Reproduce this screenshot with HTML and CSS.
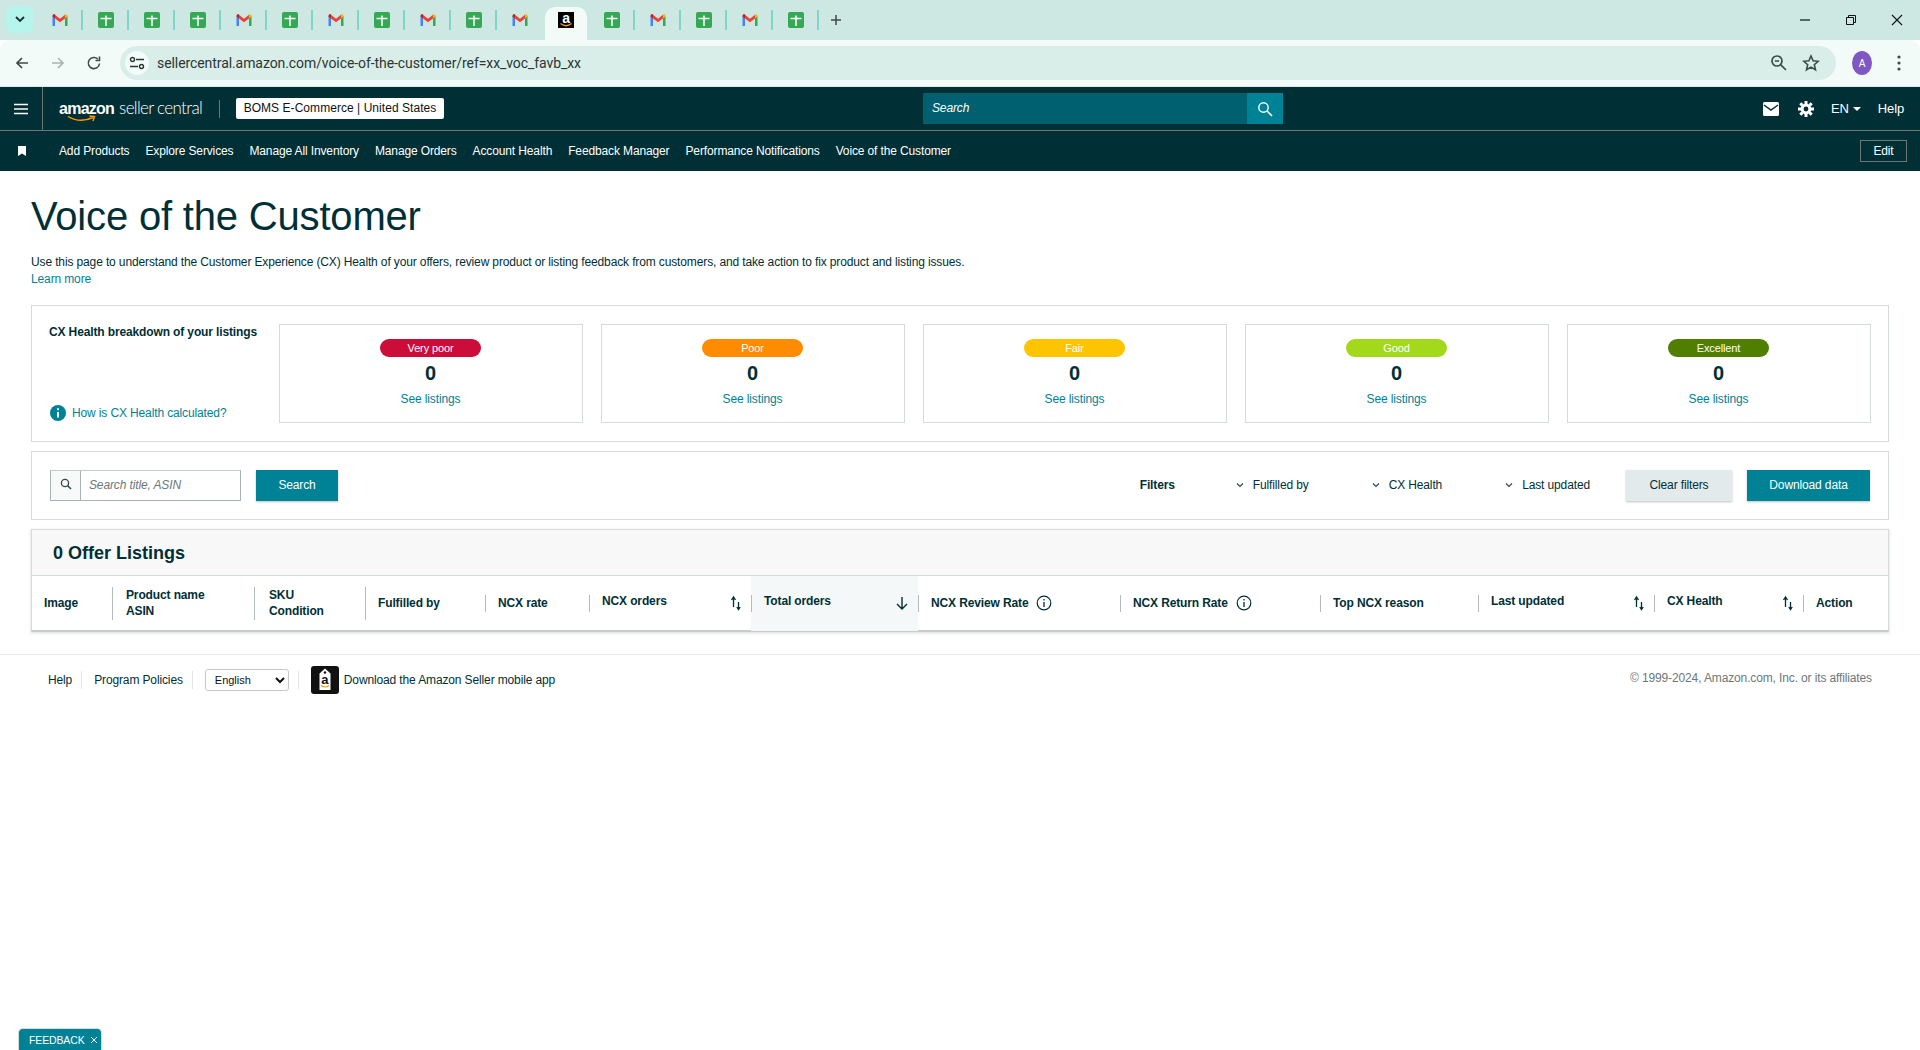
FILE: index.html
```html
<!DOCTYPE html>
<html lang="en">
<head>
    <meta charset="UTF-8">
    <meta name="viewport" content="width=device-width, initial-scale=1.0">
    <title>Voice of the Customer</title>
    <link rel="stylesheet" href="styles.css">
</head>

<body>
    <svg class="defs" width="0" height="0">
        <symbol id="gmail" viewBox="0 0 16 14">
            <path d="M0.5 13V3L3 1.5V13H1.5A1 1 0 0 1 0.5 13Z" fill="#4285f4"/>
            <path d="M13 13V1.5L15.5 3V13H13Z" fill="#34a853"/>
            <path d="M3 1.8L8 5.8L13 1.8V5.4L8 9.3L3 5.4Z" fill="#ea4335"/>
            <path d="M0.5 3C0.5 1 2.3 0.3 3 1.5V5.4L0.5 3.5Z" fill="#c5221f"/>
            <path d="M13 1.5C13.8 0.3 15.5 1 15.5 3V3.5L13 5.4Z" fill="#fbbc04"/>
        </symbol>
        <symbol id="sheet" viewBox="0 0 16 16">
            <rect width="16" height="16" rx="2" fill="#34a853"/>
            <path d="M2.5 6.5H13.5M8 3.5V14" stroke="#fff" stroke-width="1.5" fill="none"/>
        </symbol>
        <symbol id="sort" viewBox="0 0 12 16">
            <path d="M3.5 12V3M1.5 5L3.5 2L5.5 5" stroke="#002f36" stroke-width="1.3" fill="none"/>
            <path d="M8.5 7V14M6.8 12L8.5 14.6L10.2 12" stroke="#002f36" stroke-width="1.3" fill="none"/>
        </symbol>
        <symbol id="chev" viewBox="0 0 8 6">
            <path d="M1 1.5L4 4.5L7 1.5" stroke="#33494e" stroke-width="1.2" fill="none"/>
        </symbol>
        <symbol id="info-line" viewBox="0 0 16 16">
            <circle cx="8" cy="8" r="6.8" stroke="#002f36" stroke-width="1.2" fill="none"/>
            <path d="M8 7V12M8 4V5.4" stroke="#002f36" stroke-width="1.3" fill="none"/>
        </symbol>
    </svg>

    <div class="tabstrip">
        <button class="tab-search">
            <svg width="10" height="7" viewBox="0 0 10 7"><path d="M1 1L5 5L9 1" stroke="#1f2d2a" stroke-width="1.8" fill="none"/></svg>
        </button>
        <div class="tabs">
            <span class="tab sep"><svg class="fav-m"><use href="#gmail"/></svg></span>
            <span class="tab sep"><svg class="fav"><use href="#sheet"/></svg></span>
            <span class="tab sep"><svg class="fav"><use href="#sheet"/></svg></span>
            <span class="tab sep"><svg class="fav"><use href="#sheet"/></svg></span>
            <span class="tab sep"><svg class="fav-m"><use href="#gmail"/></svg></span>
            <span class="tab sep"><svg class="fav"><use href="#sheet"/></svg></span>
            <span class="tab sep"><svg class="fav-m"><use href="#gmail"/></svg></span>
            <span class="tab sep"><svg class="fav"><use href="#sheet"/></svg></span>
            <span class="tab sep"><svg class="fav-m"><use href="#gmail"/></svg></span>
            <span class="tab sep"><svg class="fav"><use href="#sheet"/></svg></span>
            <span class="tab"><svg class="fav-m"><use href="#gmail"/></svg></span>
            <span class="tab tab-active">
                <span class="fav-amazon">a
                    <svg class="fav-smile" width="12" height="5" viewBox="0 0 12 5"><path d="M0.5 0.5Q6 5 11.5 0.5" stroke="#f90" stroke-width="1.3" fill="none"/></svg>
                </span>
            </span>
            <span class="tab sep"><svg class="fav"><use href="#sheet"/></svg></span>
            <span class="tab sep"><svg class="fav-m"><use href="#gmail"/></svg></span>
            <span class="tab sep"><svg class="fav"><use href="#sheet"/></svg></span>
            <span class="tab sep"><svg class="fav-m"><use href="#gmail"/></svg></span>
            <span class="tab sep"><svg class="fav"><use href="#sheet"/></svg></span>
        </div>
        <svg class="new-tab" width="12" height="12" viewBox="0 0 12 12"><path d="M6 1V11M1 6H11" stroke="#3e4b48" stroke-width="1.5"/></svg>
        <div class="window-controls">
            <svg width="12" height="12" viewBox="0 0 12 12"><path d="M1 6H11" stroke="#111" stroke-width="1.2"/></svg>
            <svg width="12" height="12" viewBox="0 0 12 12"><path d="M1.5 3.5H8.5V10.5H1.5ZM3.5 3.5V1.5H10.5V8.5H8.5" stroke="#111" fill="none"/></svg>
            <svg width="12" height="12" viewBox="0 0 12 12"><path d="M1 1L11 11M11 1L1 11" stroke="#111" stroke-width="1.1"/></svg>
        </div>
    </div>

    <div class="toolbar">
        <svg class="tool-icon" viewBox="0 0 16 16"><path d="M14 8H3M8 3L3 8L8 13" stroke="#3e4b48" stroke-width="1.7" fill="none"/></svg>
        <svg class="tool-icon" viewBox="0 0 16 16"><path d="M2 8H13M8 3L13 8L8 13" stroke="#a9b3b0" stroke-width="1.7" fill="none"/></svg>
        <svg class="tool-icon" viewBox="0 0 16 16"><path d="M13.5 8.5A5.6 5.6 0 1 1 11.8 4M13.5 1.5V5.5H9.5" stroke="#3e4b48" stroke-width="1.6" fill="none"/></svg>
        <div class="omnibox">
            <span class="site-chip">
                <svg width="16" height="14" viewBox="0 0 16 14"><path d="M7 3.5H15M1 10.5H9" stroke="#2b3634" stroke-width="1.6"/><circle cx="3.5" cy="3.5" r="2" stroke="#2b3634" stroke-width="1.4" fill="none"/><circle cx="12.5" cy="10.5" r="2" stroke="#2b3634" stroke-width="1.4" fill="none"/></svg>
            </span>
            <span class="url">sellercentral.amazon.com/voice-of-the-customer/ref=xx_voc_favb_xx</span>
            <svg class="omni-icon" width="18" height="18" viewBox="0 0 18 18"><circle cx="7" cy="7" r="5" stroke="#3e4b48" stroke-width="1.7" fill="none"/><path d="M10.8 10.8L16 16M4.8 7H9.2" stroke="#3e4b48" stroke-width="1.7"/></svg>
            <svg class="omni-icon" width="18" height="18" viewBox="0 0 18 18"><path d="M9 2L11.1 6.8L16.2 7.3L12.3 10.7L13.5 15.8L9 13.1L4.5 15.8L5.7 10.7L1.8 7.3L6.9 6.8Z" stroke="#3e4b48" stroke-width="1.6" fill="none"/></svg>
        </div>
        <span class="avatar">A</span>
        <svg class="tool-dots" width="4" height="16" viewBox="0 0 4 16"><circle cx="2" cy="2" r="1.6" fill="#3e4b48"/><circle cx="2" cy="8" r="1.6" fill="#3e4b48"/><circle cx="2" cy="14" r="1.6" fill="#3e4b48"/></svg>
    </div>

    <header class="topbar">
        <div class="menu-btn">
            <svg width="14" height="12" viewBox="0 0 14 12"><path d="M0 1.5H14M0 6H14M0 10.5H14" stroke="#fff" stroke-width="1.6"/></svg>
        </div>
        <div class="logo">
            <span class="logo-amazon">amazon</span>
            <span class="logo-seller">seller central</span>
            <svg class="logo-smile" width="30" height="8" viewBox="0 0 30 8"><path d="M1 1.5Q13 8.5 26 2.5M22.5 1L27.5 1.5L26 6" stroke="#f90" stroke-width="1.4" fill="none"/></svg>
        </div>
        <span class="logo-divider"></span>
        <span class="account-badge">BOMS E-Commerce | United States</span>

        <div class="top-search">
            <span class="top-search-text">Search</span>
            <span class="top-search-btn">
                <svg width="16" height="16" viewBox="0 0 16 16"><circle cx="6.5" cy="6.5" r="4.7" stroke="#fff" stroke-width="1.4" fill="none"/><path d="M10 10L15 15" stroke="#fff" stroke-width="1.6"/></svg>
            </span>
        </div>

        <div class="top-right">
            <svg class="mail" width="16" height="14" viewBox="0 0 16 14"><rect width="16" height="14" rx="1.5" fill="#fff"/><path d="M1 3L8 8L15 3" stroke="#002f36" stroke-width="1.5" fill="none"/></svg>
            <svg class="gear" width="16" height="16" viewBox="0 0 16 16"><circle cx="8" cy="8" r="3.9" fill="none" stroke="#fff" stroke-width="3"/><path d="M8 0V3M8 13V16M0 8H3M13 8H16M2.3 2.3L4.4 4.4M11.6 11.6L13.7 13.7M13.7 2.3L11.6 4.4M4.4 11.6L2.3 13.7" stroke="#fff" stroke-width="3"/></svg>
            <span class="lang">EN<i class="caret"></i></span>
            <span class="top-help">Help</span>
        </div>
    </header>

    <nav class="favbar">
        <svg class="bookmark" width="8" height="10" viewBox="0 0 8 10"><path d="M0 0H8V10L4 7.5L0 10Z" fill="#fff"/></svg>
        <a href="#">Add Products</a>
        <a href="#">Explore Services</a>
        <a href="#">Manage All Inventory</a>
        <a href="#">Manage Orders</a>
        <a href="#">Account Health</a>
        <a href="#">Feedback Manager</a>
        <a href="#">Performance Notifications</a>
        <a href="#">Voice of the Customer</a>
        <span class="edit-btn">Edit</span>
    </nav>

    <main class="page">
        <h1>Voice of the Customer</h1>
        <p class="intro">Use this page to understand the Customer Experience (CX) Health of your offers, review product or listing feedback from customers, and take action to fix product and listing issues.</p>
        <a class="learn-more" href="#">Learn more</a>

        <section class="panel breakdown">
            <div class="breakdown-side">
                <strong>CX Health breakdown of your listings</strong>
                <a class="calc-link" href="#">
                    <svg width="16" height="16" viewBox="0 0 16 16"><circle cx="8" cy="8" r="8" fill="#008296"/><path d="M8 7V12.5M8 3.3V5.3" stroke="#fff" stroke-width="2"/></svg>
                    How is CX Health calculated?
                </a>
            </div>
            <div class="health-card">
                <span class="pill pill-verypoor">Very poor</span>
                <b>0</b>
                <a href="#">See listings</a>
            </div>
            <div class="health-card">
                <span class="pill pill-poor">Poor</span>
                <b>0</b>
                <a href="#">See listings</a>
            </div>
            <div class="health-card">
                <span class="pill pill-fair">Fair</span>
                <b>0</b>
                <a href="#">See listings</a>
            </div>
            <div class="health-card">
                <span class="pill pill-good">Good</span>
                <b>0</b>
                <a href="#">See listings</a>
            </div>
            <div class="health-card">
                <span class="pill pill-excellent">Excellent</span>
                <b>0</b>
                <a href="#">See listings</a>
            </div>
        </section>

        <section class="panel filterbar">
            <div class="search-group">
                <span class="search-icon">
                    <svg width="12" height="12" viewBox="0 0 12 12"><circle cx="5" cy="5" r="3.6" stroke="#33494e" stroke-width="1.3" fill="none"/><path d="M7.6 7.6L11 11" stroke="#33494e" stroke-width="1.5"/></svg>
                </span>
                <span class="search-input">Search title, ASIN</span>
            </div>
            <span class="btn btn-primary btn-search">Search</span>
            <div class="filters">
                <strong>Filters</strong>
                <span class="filter"><svg width="8" height="6"><use href="#chev"/></svg>Fulfilled by</span>
                <span class="filter"><svg width="8" height="6"><use href="#chev"/></svg>CX Health</span>
                <span class="filter"><svg width="8" height="6"><use href="#chev"/></svg>Last updated</span>
            </div>
            <span class="btn btn-clear">Clear filters</span>
            <span class="btn btn-primary btn-download">Download data</span>
        </section>

        <section class="listings">
            <h2>0 Offer Listings</h2>
            <div class="listing-head">
                <div class="col col-image">Image</div>
                <div class="col col-line col-product">Product name<br>ASIN</div>
                <div class="col col-line col-tall col-sku">SKU<br>Condition</div>
                <div class="col col-line col-tall">Fulfilled by</div>
                <div class="col col-line">NCX rate</div>
                <div class="col col-line col-sort"><span>NCX orders</span><svg width="12" height="16"><use href="#sort"/></svg></div>
                <div class="col col-line col-sort col-active"><span>Total orders</span>
                    <svg width="14" height="16" viewBox="0 0 14 16"><path d="M7 2V14M2 9L7 14L12 9" stroke="#002f36" stroke-width="1.4" fill="none"/></svg>
                </div>
                <div class="col col-line">NCX Review Rate<svg class="col-info" width="16" height="16"><use href="#info-line"/></svg></div>
                <div class="col col-line">NCX Return Rate<svg class="col-info" width="16" height="16"><use href="#info-line"/></svg></div>
                <div class="col col-line">Top NCX reason</div>
                <div class="col col-line col-sort"><span>Last updated</span><svg width="12" height="16"><use href="#sort"/></svg></div>
                <div class="col col-line col-sort"><span>CX Health</span><svg width="12" height="16"><use href="#sort"/></svg></div>
                <div class="col col-line">Action</div>
            </div>
        </section>
    </main>

    <footer class="footer">
        <a href="#">Help</a>
        <span class="foot-sep"></span>
        <a href="#">Program Policies</a>
        <span class="foot-sep"></span>
        <select class="lang-select">
            <option>English</option>
        </select>
        <span class="foot-sep"></span>
        <svg class="app-icon" width="28" height="28" viewBox="0 0 28 28">
            <rect width="28" height="28" rx="3" fill="#111"/>
            <path d="M14 2.5L19.5 7.5V24H8.5V7.5Z" fill="#fff"/>
            <circle cx="14" cy="6.5" r="1.2" fill="#111"/>
            <path d="M10 19.5Q14 22.5 18 19.5" stroke="#f90" stroke-width="1.2" fill="none"/>
        </svg>
        <span class="app-letter">a</span>
        <a class="app-link" href="#">Download the Amazon Seller mobile app</a>
        <span class="copyright">© 1999-2024, Amazon.com, Inc. or its affiliates</span>
    </footer>

    <div class="feedback">FEEDBACK
        <svg width="8" height="8" viewBox="0 0 8 8"><path d="M1 1L7 7M7 1L1 7" stroke="#fff" stroke-width="1"/></svg>
    </div>
</body>
</html>
```

FILE: styles.css
```css
* {
    box-sizing: border-box;
}

html, body {
    height: 100%;
}

body {
    margin: 0;
    overflow: hidden;
    background: #ffffff;
    color: #002f36;
    font-family: 'Liberation Sans', Arial, sans-serif;
    font-size: 12px;
    letter-spacing: -0.13px;
}

a {
    color: #008296;
    text-decoration: none;
}

.defs {
    position: absolute;
}

/* browser chrome */
.tabstrip {
    display: flex;
    align-items: center;
    height: 40px;
    background: #cde8e2;
    padding-left: 6px;
}

.tab-search {
    width: 28px;
    height: 27px;
    margin-top: -1px;
    border: none;
    border-radius: 9px;
    background: #b5f5ec;
    display: flex;
    align-items: center;
    justify-content: center;
    padding: 0;
}

.tabs {
    display: flex;
    margin-left: 3px;
    align-items: center;
}

.tab {
    width: 46px;
    height: 16px;
    display: flex;
    align-items: center;
    justify-content: center;
    flex: none;
}

.sep {
    border-right: 2px solid #7fd6c9;
    height: 20px;
    padding-left: 2px;
}

.tab-active {
    height: 33px;
    margin-top: 7px;
    background: #f3fbf8;
    border-radius: 10px 10px 0 0;
    width: 42px;
    margin-left: 2px;
    margin-right: 2px;
    padding-bottom: 7px;
}

.fav {
    width: 16px;
    height: 16px;
}

.fav-m {
    width: 16px;
    height: 14px;
}

.fav-amazon {
    position: relative;
    width: 16px;
    height: 16px;
    background: #000;
    color: #fff;
    font-size: 14px;
    font-weight: bold;
    line-height: 13px;
    text-align: center;
}

.fav-smile {
    position: absolute;
    left: 2px;
    top: 11px;
}

.new-tab {
    margin-left: 11px;
}

.window-controls {
    margin-left: auto;
    display: flex;
    gap: 34px;
    padding-right: 17px;
}

.toolbar {
    display: flex;
    align-items: center;
    height: 47px;
    background: #f3fbf8;
    border-radius: 10px 10px 0 0;
    border-bottom: 1px solid #dce6e3;
    padding-left: 14px;
}

.tool-icon {
    width: 16px;
    height: 16px;
    margin-right: 20px;
}

.omnibox {
    display: flex;
    align-items: center;
    height: 34px;
    width: 1716px;
    margin-left: -2px;
    border-radius: 17px;
    background: #d9eee8;
    padding-left: 5px;
    padding-right: 16px;
}

.site-chip {
    width: 24px;
    height: 24px;
    border-radius: 50%;
    background: #f3fbf8;
    display: flex;
    align-items: center;
    justify-content: center;
}

.url {
    margin-left: 8px;
    font-family: Roboto, sans-serif;
    font-size: 14px;
    letter-spacing: -0.08px;
    color: #2b3634;
    flex: 1;
}

.omni-icon {
    margin-left: 14px;
}

.avatar {
    width: 20px;
    height: 24px;
    margin-left: 16px;
    border-radius: 50%;
    background: #7e57c2;
    color: #fff;
    font-size: 10px;
    display: flex;
    align-items: center;
    justify-content: center;
}

.tool-dots {
    margin-left: 25px;
}

/* seller central header */
.topbar {
    display: flex;
    align-items: center;
    height: 44px;
    background: #002f36;
    border-bottom: 1px solid #6c7778;
    color: #fff;
}

.menu-btn {
    width: 43px;
    height: 43px;
    border-right: 1px solid #6c7778;
    display: flex;
    align-items: center;
    justify-content: center;
    padding-right: 1px;
}

.logo {
    position: relative;
    margin-left: 16px;
    display: flex;
    align-items: baseline;
    width: 144px;
    height: 24px;
    line-height: 22px;
    white-space: nowrap;
}

.logo-amazon {
    font-size: 16px;
    font-weight: bold;
    letter-spacing: -0.75px;
}

.logo-seller {
    margin-left: 5px;
    font-family: Lato, sans-serif;
    font-weight: 300;
    font-size: 17px;
    letter-spacing: -0.67px;
}

.logo-smile {
    position: absolute;
    left: 8px;
    top: 18px;
}

.logo-divider {
    width: 1px;
    height: 18px;
    margin-left: 16px;
    background: #6c7778;
}

.account-badge {
    margin-left: 16px;
    height: 21px;
    width: 208px;
    border-radius: 2px;
    background: #fff;
    color: #111;
    text-align: center;
    line-height: 21px;
    letter-spacing: 0.05px;
    white-space: nowrap;
}

.top-search {
    display: flex;
    height: 31px;
    margin-left: 479px;
    width: 360px;
}

.top-search-text {
    flex: 1;
    background: #006070;
    color: #fff;
    font-style: italic;
    padding-left: 9px;
    line-height: 31px;
}

.top-search-btn {
    width: 36px;
    background: #008296;
    display: flex;
    align-items: center;
    justify-content: center;
}

.top-right {
    display: flex;
    align-items: center;
    margin-left: auto;
    padding-right: 16px;
    font-size: 13px;
}

.gear {
    margin-left: 19px;
}

.lang {
    margin-left: 17px;
    display: flex;
    align-items: center;
}

.caret {
    margin-left: 4px;
    border: 4px solid transparent;
    border-top-color: #fff;
    border-bottom: none;
}

.top-help {
    margin-left: 17px;
}

.favbar {
    display: flex;
    align-items: center;
    height: 40px;
    background: #002f36;
    padding-left: 18px;
}

.favbar a {
    color: #fff;
    margin-right: 16px;
    white-space: nowrap;
}

.bookmark {
    margin-right: 33px;
}

.edit-btn {
    margin-left: auto;
    margin-right: 13px;
    width: 47px;
    height: 22px;
    border: 1px solid #6c7778;
    color: #fff;
    text-align: center;
    line-height: 20px;
}

/* page */
.page {
    padding: 0 31px;
}

h1 {
    margin: 20px 0 0;
    font-size: 40px;
    font-weight: normal;
    line-height: 50px;
    letter-spacing: -0.18px;
    color: #002f36;
}

.intro {
    margin: 13px 0 0;
    line-height: 16px;
    color: #002f36;
}

.learn-more {
    display: block;
    margin-top: 1px;
    line-height: 16px;
}

.panel {
    display: flex;
    border: 1.5px solid #d5dbdb;
}

.breakdown {
    margin-top: 18px;
    height: 137px;
    padding: 18px 18px 18px 17px;
    gap: 18px;
}

.breakdown-side {
    width: 229.5px;
    display: flex;
    flex-direction: column;
    justify-content: space-between;
    padding-bottom: 1px;
    margin-right: -18px;
    flex: none;
}

.breakdown-side strong {
    line-height: 16px;
}

.calc-link {
    display: flex;
    align-items: center;
    gap: 6px;
    line-height: 16px;
    margin-bottom: 1px;
    margin-left: 1px;
}

.health-card {
    width: 304px;
    flex: none;
    height: 99px;
    border: 1.5px solid #d5dbdb;
    display: flex;
    flex-direction: column;
    align-items: center;
}

.pill {
    width: 101px;
    height: 18px;
    margin-top: 14px;
    border-radius: 9px;
    color: #fff;
    font-size: 11px;
    line-height: 18px;
    text-align: center;
}

.pill-verypoor { background: #cc0c39; }
.pill-poor { background: #ff8c00; }
.pill-fair { background: #ffc400; }
.pill-good { background: #a4d81a; }
.pill-excellent { background: #507f00; }

.health-card b {
    font-size: 20px;
    line-height: 24px;
    margin-top: 4px;
}

.health-card a {
    margin-top: 6px;
    line-height: 16px;
}

.filterbar {
    margin-top: 9px;
    height: 69px;
    align-items: center;
    padding: 0 18px;
}

.search-group {
    display: flex;
    width: 191px;
    height: 31px;
    border: 1px solid #a6b2b4;
    border-top-color: #c3cbcc;
}

.search-icon {
    width: 30px;
    background: #f8f9f9;
    border-right: 1px solid #a6b2b4;
    display: flex;
    align-items: center;
    justify-content: center;
    padding-bottom: 3px;
}

.search-input {
    padding-left: 8px;
    font-style: italic;
    color: #6c7778;
    line-height: 29px;
}

.btn {
    display: block;
    height: 31px;
    line-height: 31px;
    text-align: center;
    box-shadow: 0 1px 2px rgba(0, 0, 0, 0.25);
}

.btn-primary {
    background: #008296;
    color: #fff;
}

.btn-search {
    margin-left: 15px;
    width: 82px;
}

.filters {
    display: flex;
    align-items: center;
    gap: 63px;
    margin-left: auto;
    margin-right: 36px;
    padding-bottom: 2px;
}

.filters strong {
    margin-right: -2px;
}

.filter {
    display: flex;
    align-items: center;
    gap: 9px;
}

.btn-clear {
    width: 106px;
    background: #e3eaeb;
    color: #002f36;
}

.btn-download {
    width: 123px;
    margin-left: 15px;
}

.listings {
    margin-top: 9px;
    height: 103px;
    border: 1.5px solid #d5dbdb;
    border-bottom: 2px solid #c9cccc;
    box-shadow: 0 1px 3px rgba(0, 0, 0, 0.15);
}

.listings h2 {
    margin: 0;
    height: 46px;
    padding-left: 21px;
    background: #f8f8f8;
    border-bottom: 1.5px solid #d5dbdb;
    font-size: 18px;
    line-height: 46px;
    letter-spacing: 0;
}

.listing-head {
    display: grid;
    grid-template-columns: 80px 142px 111px 120px 104px 162px 167px 202px 200px 158px 176px 149px 1fr;
    height: 55px;
    font-weight: bold;
    line-height: 16px;
}

.col {
    position: relative;
    display: flex;
    align-items: center;
    padding-left: 13px;
    padding-bottom: 1px;
}

.col-image {
    padding-left: 12px;
}

.col-product {
    padding-left: 14px;
}

.col-sku {
    padding-left: 15px;
}

.col-line::before {
    content: "";
    position: absolute;
    left: 0;
    top: 19px;
    height: 17px;
    width: 1px;
    background: #b4bdbe;
}

.col-product::before,
.col-tall::before {
    top: 11px;
    height: 33px;
}

.col-sort {
    justify-content: space-between;
    padding-right: 9px;
}

.col-sort span {
    padding-bottom: 4px;
}

.col-active {
    background: #f4f8f8;
}

.col-info {
    margin-left: 8px;
}

/* footer */
.footer {
    display: flex;
    align-items: center;
    margin-top: 22px;
    height: 50px;
    border-top: 1.5px solid #e8e8e8;
    padding: 0 48px;
}

.footer a {
    color: #002f36;
}

.foot-sep {
    width: 1px;
    height: 18px;
    margin: 0 12px 0 9px;
    background: #e3e6e6;
}

.lang-select {
    width: 84px;
    height: 22px;
    margin: 0;
    border: 1px solid #c8c8c8;
    border-radius: 3px;
    background: #fff;
    color: #111;
    font-family: 'Liberation Sans', Arial, sans-serif;
    font-size: 11px;
    padding-left: 5px;
}

.app-icon {
    flex: none;
}

.app-letter {
    width: 28px;
    margin-left: -28px;
    margin-top: -1px;
    color: #111;
    font-size: 13px;
    font-weight: bold;
    text-align: center;
}

.footer .app-link {
    margin-left: 5px;
}

.copyright {
    margin-left: auto;
    color: #6c7778;
    padding-bottom: 3px;
}

.feedback {
    position: fixed;
    left: 18px;
    bottom: 0;
    display: flex;
    align-items: center;
    gap: 5px;
    width: 84px;
    height: 22px;
    border-radius: 5px 5px 0 0;
    border: 1px solid #d5dbdb;
    border-bottom: none;
    background: #008296;
    color: #fff;
    font-size: 10.5px;
    padding-left: 10px;
    white-space: nowrap;
}
```
